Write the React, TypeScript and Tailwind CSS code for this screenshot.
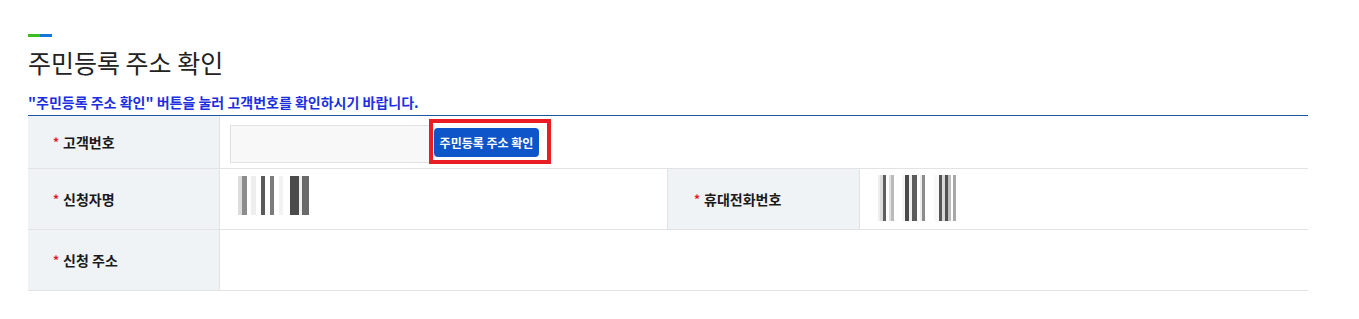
import React from 'react';

const nameBars = [
  { w: 4, c: '#dcdcdc' },
  { w: 5, c: '#8c8c8c' },
  { w: 4, c: '#ffffff' },
  { w: 5, c: '#eeeeee' },
  { w: 5, c: '#ffffff' },
  { w: 4, c: '#5a5a5a' },
  { w: 5, c: '#ffffff' },
  { w: 4, c: '#7b7b7b' },
  { w: 5, c: '#ffffff' },
  { w: 4, c: '#f2f2f2' },
  { w: 7, c: '#ffffff' },
  { w: 9, c: '#4b4b4b' },
  { w: 3, c: '#f0f0f0' },
  { w: 7, c: '#6a6a6a' },
];

const phoneBars = [
  { w: 2, c: '#eeeeee' },
  { w: 3, c: '#dddddd' },
  { w: 3, c: '#5f5f5f' },
  { w: 3, c: '#ffffff' },
  { w: 2, c: '#e0e0e0' },
  { w: 3, c: '#bbbbbb' },
  { w: 8, c: '#ffffff' },
  { w: 3, c: '#f5f5f5' },
  { w: 4, c: '#4a4a4a' },
  { w: 3, c: '#f0f0f0' },
  { w: 5, c: '#5c5c5c' },
  { w: 3, c: '#ffffff' },
  { w: 2, c: '#eeeeee' },
  { w: 3, c: '#8c8c8c' },
  { w: 9, c: '#ffffff' },
  { w: 5, c: '#f8f8f8' },
  { w: 3, c: '#555555' },
  { w: 3, c: '#d8d8d8' },
  { w: 3, c: '#505050' },
  { w: 3, c: '#bdbdbd' },
  { w: 2, c: '#ffffff' },
  { w: 3, c: '#a8a8a8' },
];

function Bars({ bars, height }: { bars: { w: number; c: string }[]; height: number }) {
  return (
    <div className="flex" style={{ height }}>
      {bars.map((b, i) => (
        <div key={i} style={{ width: b.w, backgroundColor: b.c }} />
      ))}
    </div>
  );
}

function Label({ text, className = '' }: { text: string; className?: string }) {
  return (
    <div className={`flex items-center bg-[#f0f3f6] pl-[25px] text-[14px] font-semibold text-[#1a1a1a] ${className}`}>
      <span className="mr-[4px] -mt-[1px] text-[12px] font-bold text-[#e8141e]">*</span>
      {text}
    </div>
  );
}

export default function App() {
  return (
    <div className="min-h-screen bg-white px-[28px] pt-[34px] font-['Noto_Sans_CJK_KR',sans-serif]">
      {/* 제목 */}
      <div className="flex h-[3px] w-[24px]">
        <div className="w-[12px] bg-[#3cbf1e]" />
        <div className="w-[12px] bg-[#1677d9]" />
      </div>
      <h2 className="mt-[8px] text-[25px] leading-[34px] font-normal text-[#222]">주민등록 주소 확인</h2>
      <p className="mt-[14px] text-[14px] leading-[18px] font-bold text-[#1c2fe0]">
        "주민등록 주소 확인" 버튼을 눌러 고객번호를 확인하시기 바랍니다.
      </p>

      {/* 입력 테이블 */}
      <div className="mt-[4px] w-[1280px] border-t border-[#1d579f]">
        <div className="flex h-[53px] border-b border-[#e3e3e3]">
          <Label text="고객번호" className="w-[192px] border-r border-[#e3e3e3]" />
          <div className="flex items-start pt-[9px] pl-[10px]">
            <div className="h-[38px] w-[202px] border border-[#e0e0e0] bg-[#f8f8f8]" />
            <div className="relative ml-[2px] mt-[3px]">
              <button className="h-[29px] w-[105px] rounded-[4px] bg-[#0d55c8] text-[12px] font-bold text-white">
                주민등록 주소 확인
              </button>
              <div className="absolute -left-[5px] -top-[9px] h-[45px] w-[122px] border-[4px] border-[#ea1c24]" />
            </div>
          </div>
        </div>

        <div className="flex h-[61px] border-b border-[#e3e3e3]">
          <Label text="신청자명" className="w-[192px] border-r border-[#e3e3e3]" />
          <div className="w-[447px] pt-[7px] pl-[18px]">
            <Bars bars={nameBars} height={39} />
          </div>
          <Label text="휴대전화번호" className="w-[193px] border-x border-[#e3e3e3] pl-[26px]" />
          <div className="flex-1 pt-[6px] pl-[18px]">
            <Bars bars={phoneBars} height={46} />
          </div>
        </div>

        <div className="flex h-[61px] border-b border-[#e3e3e3]">
          <Label text="신청 주소" className="w-[192px] border-r border-[#e3e3e3]" />
          <div className="flex-1" />
        </div>
      </div>
    </div>
  );
}
